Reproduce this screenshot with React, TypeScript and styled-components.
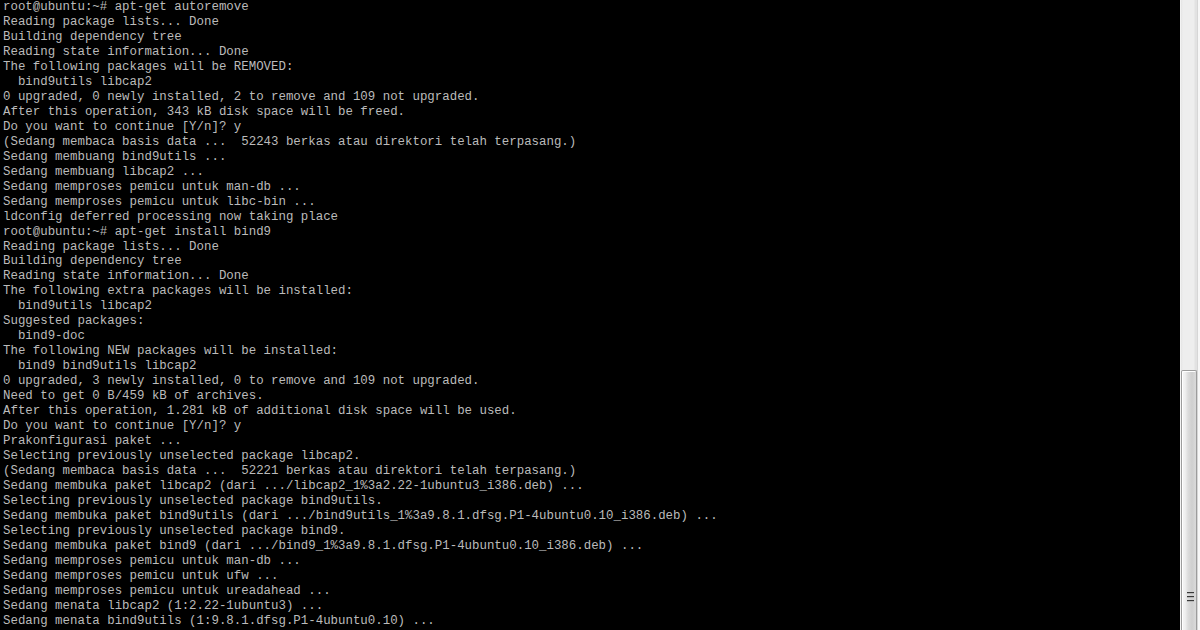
import React from "react";
import styled, { createGlobalStyle } from "styled-components";

const Global = createGlobalStyle`
  html, body { margin: 0; padding: 0; background: #000; }
  body { width: 1200px; height: 630px; overflow: hidden; }
`;

const Window = styled.div`
  display: flex;
  width: 1200px;
  height: 630px;
  background: #000;
  overflow: hidden;
`;

const Screen = styled.pre`
  flex: 1;
  margin: 0;
  padding: 0 0 0 3px;
  background: #000;
  color: #bbbbbb;
  font-family: "Liberation Mono", "Courier New", monospace;
  font-size: 12.41px;
  line-height: 14.98px;
  white-space: pre;
  overflow: hidden;
`;

const Line = styled.div`
  height: 14.98px;
`;

const ScrollBar = styled.div`
  width: 20px;
  display: flex;
  background: #f7f7f7;
`;

const Track = styled.div`
  width: 16px;
  display: flex;
  flex-direction: column;
  border-left: 1px solid #f3f3f3;
  border-right: 1px solid #d6d6d6;
  background: linear-gradient(to right, #e4e4e4 0px, #eeeeee 2px, #eeeeee 13px, #e2e2e2 14px);
`;

const TrackSpace = styled.div<{ $h: number }>`
  height: ${(p) => p.$h}px;
  flex-shrink: 0;
`;

const Thumb = styled.div`
  flex: 1;
  display: flex;
  align-items: flex-end;
  justify-content: center;
  padding-bottom: 28px;
  border: 1px solid #9c9c9c;
  border-bottom: none;
  border-radius: 2px 2px 0 0;
  background: linear-gradient(
    to right,
    #f4f4f4 0px,
    #f0f0f0 3px,
    #dcdcdc 6px,
    #cfcfcf 10px,
    #d8d8d8 13px
  );
  box-shadow: inset 1px 1px 0 #ffffff;
`;

const Grip = styled.div`
  display: flex;
  flex-direction: column;
  gap: 2px;
  margin-left: 2px;
`;

const GripLine = styled.div`
  width: 7px;
  height: 2px;
  background: linear-gradient(to bottom, #3a3a3a 0 1px, #b8b8b8 1px 2px);
`;

const lines = [
  "root@ubuntu:~# apt-get autoremove",
  "Reading package lists... Done",
  "Building dependency tree",
  "Reading state information... Done",
  "The following packages will be REMOVED:",
  "  bind9utils libcap2",
  "0 upgraded, 0 newly installed, 2 to remove and 109 not upgraded.",
  "After this operation, 343 kB disk space will be freed.",
  "Do you want to continue [Y/n]? y",
  "(Sedang membaca basis data ...  52243 berkas atau direktori telah terpasang.)",
  "Sedang membuang bind9utils ...",
  "Sedang membuang libcap2 ...",
  "Sedang memproses pemicu untuk man-db ...",
  "Sedang memproses pemicu untuk libc-bin ...",
  "ldconfig deferred processing now taking place",
  "root@ubuntu:~# apt-get install bind9",
  "Reading package lists... Done",
  "Building dependency tree",
  "Reading state information... Done",
  "The following extra packages will be installed:",
  "  bind9utils libcap2",
  "Suggested packages:",
  "  bind9-doc",
  "The following NEW packages will be installed:",
  "  bind9 bind9utils libcap2",
  "0 upgraded, 3 newly installed, 0 to remove and 109 not upgraded.",
  "Need to get 0 B/459 kB of archives.",
  "After this operation, 1.281 kB of additional disk space will be used.",
  "Do you want to continue [Y/n]? y",
  "Prakonfigurasi paket ...",
  "Selecting previously unselected package libcap2.",
  "(Sedang membaca basis data ...  52221 berkas atau direktori telah terpasang.)",
  "Sedang membuka paket libcap2 (dari .../libcap2_1%3a2.22-1ubuntu3_i386.deb) ...",
  "Selecting previously unselected package bind9utils.",
  "Sedang membuka paket bind9utils (dari .../bind9utils_1%3a9.8.1.dfsg.P1-4ubuntu0.10_i386.deb) ...",
  "Selecting previously unselected package bind9.",
  "Sedang membuka paket bind9 (dari .../bind9_1%3a9.8.1.dfsg.P1-4ubuntu0.10_i386.deb) ...",
  "Sedang memproses pemicu untuk man-db ...",
  "Sedang memproses pemicu untuk ufw ...",
  "Sedang memproses pemicu untuk ureadahead ...",
  "Sedang menata libcap2 (1:2.22-1ubuntu3) ...",
  "Sedang menata bind9utils (1:9.8.1.dfsg.P1-4ubuntu0.10) ...",
];

export default function App() {
  return (
    <>
      <Global />
      <Window>
        <Screen>
          {lines.map((l, i) => (
            <Line key={i}>{l}</Line>
          ))}
        </Screen>
        <ScrollBar>
          <Track>
            <TrackSpace $h={370} />
            <Thumb>
              <Grip>
                <GripLine />
                <GripLine />
                <GripLine />
              </Grip>
            </Thumb>
          </Track>
        </ScrollBar>
      </Window>
    </>
  );
}
